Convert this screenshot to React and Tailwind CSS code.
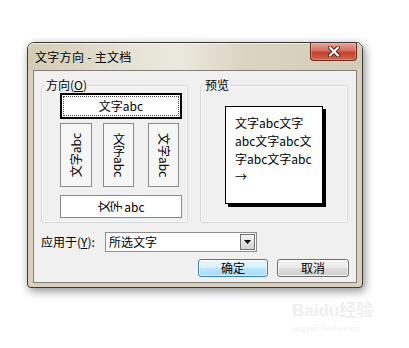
import React from "react";

function VBox({ className = "", children }) {
  return (
    <div className={`w-[31px] h-[64px] border border-[#8a8a8a] bg-[#f6f6f6] flex items-center justify-center text-[12px] leading-[12px] text-black ${className}`}>
      {children}
    </div>
  );
}

export default function App() {
  return (
    <div className="w-[409px] h-[348px] bg-white overflow-hidden pt-[42px] pl-[27px] font-['Noto_Sans_CJK_SC','Noto_Sans',sans-serif] text-black">
      {/* window */}
      <div className="w-[336px] h-[246px] flex flex-col rounded-t-[7px] rounded-b-[4px] border border-[#3a3a3a] bg-[#d6d0bc] shadow-[2px_3px_10px_rgba(0,0,0,0.45)]">
        {/* title bar */}
        <div className="h-[27px] flex items-start rounded-t-[6px] bg-[linear-gradient(90deg,#d2cbb4_0%,#e6e2d5_30%,#ebe8df_45%,#dad4c1_65%,#d3ccb6_100%)] shadow-[inset_0_1px_0_rgba(255,255,255,0.6)]">
          <div className="ml-[7px] mt-[6px] text-[12px] leading-[16px] text-black whitespace-nowrap tracking-[0.3px]">文字方向 - 主文档</div>
          <div className="ml-auto mr-[5px] w-[47px] h-[18px] rounded-b-[4px] border border-t-0 border-[#6b2a20] bg-[linear-gradient(#eba596,#d76f5f_45%,#c4412f_55%,#d0664e)] flex items-center justify-center shadow-[inset_0_0_0_1px_rgba(255,200,190,0.35)]">
            <svg width="14" height="11" viewBox="0 0 14 11">
              <path d="M3 1.5 L11 9.5 M11 1.5 L3 9.5" stroke="#5a1d14" strokeWidth="4" strokeLinecap="round" />
              <path d="M3 1.5 L11 9.5 M11 1.5 L3 9.5" stroke="#ffffff" strokeWidth="2.2" strokeLinecap="round" />
            </svg>
          </div>
        </div>

        {/* client area */}
        <div className="mx-[5px] h-[213px] border border-[#85817a] bg-[#f0f0f0] flex flex-col">
          <div className="flex ml-[7px] mt-[6px]">
            {/* direction group */}
            <fieldset className="w-[147px] h-[146px] rounded-[3px] border border-[#d3d8dc] p-0 m-0 shadow-[inset_0_0_0_1px_#fbfbfb]">
              <legend className="ml-[3px] px-[1px] text-[12px] leading-[16px]">
                方向(<span className="underline">O</span>)
              </legend>
              <div className="pl-[18px] flex flex-col">
                <div className="w-[122px] h-[26px] border-2 border-black bg-white p-[1px]">
                  <div className="h-full border border-dotted border-[#444] flex items-center justify-center text-[12px] leading-[12px]">
                    文字abc
                  </div>
                </div>
                <div className="flex mt-[4px]">
                  <VBox className="w-[32px]">
                    <span className="[writing-mode:vertical-rl] [text-orientation:sideways] rotate-180">文字abc</span>
                  </VBox>
                  <VBox className="ml-[11px]">
                    <span className="[writing-mode:vertical-rl]">文字abc</span>
                  </VBox>
                  <VBox className="ml-[14px]">
                    <span className="[writing-mode:vertical-rl] [text-orientation:sideways]">文字abc</span>
                  </VBox>
                </div>
                <div className="mt-[8px] w-[122px] h-[23px] border border-[#8a8a8a] bg-white flex items-center justify-center text-[12px] leading-[12px]">
                  <div className="w-[26px] h-[12px] flex items-center justify-center">
                    <span className="shrink-0 whitespace-nowrap h-[24px] w-[12px] [writing-mode:vertical-rl] -rotate-90">文字</span>
                  </div>
                  <span className="ml-[1px]">abc</span>
                </div>
              </div>
            </fieldset>

            {/* preview group */}
            <fieldset className="ml-[12px] w-[148px] h-[146px] rounded-[3px] border border-[#d3d8dc] p-0 m-0 shadow-[inset_0_0_0_1px_#fbfbfb]">
              <legend className="ml-[3px] px-[1px] text-[12px] leading-[16px]">预览</legend>
              <div className="ml-[24px] mt-[13px] w-[98px] h-[98px] border border-black bg-white shadow-[3px_3px_0_#000] pl-[9px] pt-[7px] text-[12px] leading-[18px] whitespace-nowrap">
                <div>文字abc文字</div>
                <div>abc文字abc文</div>
                <div>字abc文字abc</div>
                <div>→</div>
              </div>
            </fieldset>
          </div>

          {/* apply to row */}
          <div className="flex items-center ml-[7px] mt-[9px]">
            <div className="w-[64px] text-[12px] leading-[16px] whitespace-nowrap">
              应用于(<span className="underline">Y</span>):
            </div>
            <div className="w-[152px] h-[20px] border border-[#8e8f8f] bg-white flex items-center p-[1px]">
              <div className="flex-1 pl-[2px] text-[12px] leading-[16px]">所选文字</div>
              <div className="w-[15px] h-full border border-[#707070] bg-[linear-gradient(#f6f6f6,#e2e2e2_50%,#d3d3d3)] flex items-center justify-center">
                <svg width="7" height="4" viewBox="0 0 7 4">
                  <path d="M0 0 H7 L3.5 4 Z" fill="#000" />
                </svg>
              </div>
            </div>
          </div>

          {/* buttons */}
          <div className="flex justify-end mr-[7px] mt-[7px]">
            <div className="w-[70px] h-[18px] rounded-[3px] border border-[#3c7fb1] bg-[linear-gradient(#eaf6fd,#d9f0fc_50%,#bee6fd_50%,#a7d9f5)] shadow-[inset_0_0_0_1px_rgba(255,255,255,0.7)] flex items-center justify-center text-[12px] leading-[16px]">
              确定
            </div>
            <div className="ml-[9px] w-[72px] h-[18px] rounded-[3px] border border-[#707070] bg-[linear-gradient(#f2f2f2,#ebebeb_50%,#dddddd_50%,#cfcfcf)] shadow-[inset_0_0_0_1px_rgba(255,255,255,0.7)] flex items-center justify-center text-[12px] leading-[16px]">
              取消
            </div>
          </div>
        </div>
      </div>

      {/* watermark */}
      <div className="ml-[265px] mt-[12px] flex flex-col text-[#efefef]">
        <div className="text-[17px] leading-[22px] font-bold font-['Liberation_Sans','Noto_Sans_CJK_SC',sans-serif]">Baidu经验</div>
        <div className="text-[9px] leading-[12px] font-['Liberation_Serif',serif]">jingyan.baidu.com</div>
      </div>
    </div>
  );
}
